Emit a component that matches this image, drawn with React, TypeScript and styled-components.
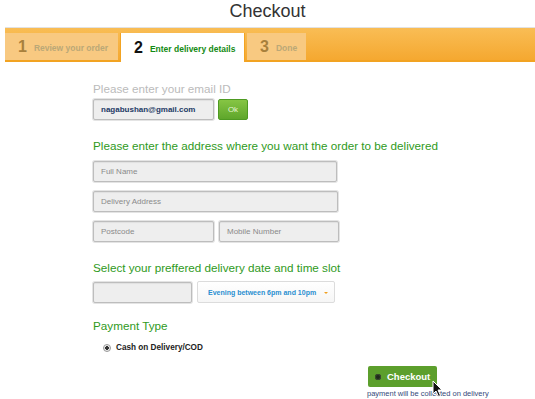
import React from "react";
import styled, { createGlobalStyle } from "styled-components";

const Global = createGlobalStyle`
  html, body { margin: 0; padding: 0; background: #fff; }
  body { font-family: "Liberation Sans", Arial, sans-serif; width: 535px; height: 399px; overflow: hidden; }
`;

const Page = styled.div`
  position: relative;
  width: 535px;
  height: 399px;
`;

const Title = styled.h1`
  margin: 0;
  height: 27px;
  font-size: 18px;
  line-height: 22px;
  font-weight: normal;
  color: #333;
  text-align: center;
`;

const Bar = styled.div`
  margin-left: 5px;
  height: 29px;
  border-top: 1px solid #e2e2e2;
  border-bottom: 2px solid #f2a322;
  background: linear-gradient(#f9bd55, #f5a830);
  display: flex;
  align-items: flex-end;
  padding-top: 3px;
  box-sizing: content-box;
`;

const Tab = styled.div<{ $active?: boolean; $w: number }>`
  width: ${(p) => p.$w}px;
  height: ${(p) => (p.$active ? 29 : 27)}px;
  margin-bottom: ${(p) => (p.$active ? -2 : 0)}px;
  margin-right: 2px;
  box-sizing: border-box;
  background: ${(p) => (p.$active ? "#fff" : "#f8c981")};
  border-left: ${(p) => (p.$active ? "1px solid #f2a322" : "none")};
  border-right: ${(p) => (p.$active ? "1px solid #f2a322" : "none")};
  display: flex;
  align-items: center;
  padding-left: 13px;
  gap: 7px;
`;

const TabNum = styled.span<{ $active?: boolean }>`
  font-size: 16px;
  font-weight: bold;
  color: ${(p) => (p.$active ? "#111" : "#a8803c")};
`;

const TabLabel = styled.span<{ $active?: boolean }>`
  font-size: 8.5px;
  font-weight: bold;
  margin-top: 2px;
  color: ${(p) => (p.$active ? "#138a13" : "#bba877")};
`;

const Content = styled.div`
  padding-left: 93px;
  display: flex;
  flex-direction: column;
`;

const Label = styled.div<{ $muted?: boolean; $top: number }>`
  margin-top: ${(p) => p.$top}px;
  font-size: 11.7px;
  line-height: 14px;
  color: ${(p) => (p.$muted ? "#bbbbbb" : "#2f9a1c")};
`;

const Row = styled.div<{ $top: number; $gap?: number }>`
  margin-top: ${(p) => p.$top}px;
  display: flex;
  gap: ${(p) => p.$gap ?? 4}px;
  align-items: center;
`;

const Field = styled.div<{ $w: number; $h?: number; $filled?: boolean }>`
  width: ${(p) => p.$w}px;
  height: ${(p) => p.$h ?? 21}px;
  box-sizing: border-box;
  background: #eeeeee;
  border: 1px solid #bdbdbd;
  border-radius: 2px;
  box-shadow: 0 0 0 1px #e4e4e4, inset 0 1px 1px rgba(0,0,0,0.06);
  display: flex;
  align-items: center;
  padding-left: 7px;
  font-size: 8px;
  white-space: nowrap;
  font-weight: ${(p) => (p.$filled ? "bold" : "normal")};
  color: ${(p) => (p.$filled ? "#233a66" : "#8a8a8a")};
`;

const OkButton = styled.div`
  width: 30px;
  height: 21px;
  box-sizing: border-box;
  border: 1px solid #4e9a22;
  border-radius: 2px;
  background: linear-gradient(#86c544, #5ea62b);
  color: #e4f4d4;
  font-size: 8px;
  display: flex;
  align-items: center;
  justify-content: center;
`;

const Select = styled.div`
  width: 138px;
  height: 22px;
  box-sizing: border-box;
  border: 1px solid #dcdcdc;
  border-radius: 2px;
  background: linear-gradient(#ffffff, #f6f6f6);
  display: flex;
  align-items: center;
  padding-left: 10px;
  font-size: 7px;
  font-weight: bold;
  white-space: nowrap;
  color: #2a8fd0;
  gap: 8px;
`;

const Caret = styled.span`
  flex-shrink: 0;
  width: 0;
  height: 0;
  margin-top: 1px;
  border-left: 2px solid transparent;
  border-right: 2px solid transparent;
  border-top: 2px solid #f0a020;
`;

const RadioRow = styled.label`
  margin-top: 10px;
  margin-left: 10px;
  display: flex;
  align-items: center;
  gap: 5px;
  font-size: 8.2px;
  font-weight: bold;
  color: #222;
`;

const Radio = styled.span`
  width: 8px;
  height: 8px;
  box-sizing: border-box;
  border-radius: 50%;
  border: 1px solid #999;
  background: radial-gradient(circle, #333 0 1.6px, #e8e8e8 2px);
`;

const Footer = styled.div`
  margin-top: 14px;
  padding-left: 367px;
  display: flex;
  flex-direction: column;
  align-items: flex-start;
`;

const CheckoutButton = styled.div`
  margin-left: 1px;
  width: 69px;
  height: 21px;
  box-sizing: border-box;
  border-radius: 2px;
  background: #5c9f2c;
  display: flex;
  align-items: center;
  padding-left: 7px;
  gap: 6px;
  color: #fff;
  font-weight: bold;
  font-size: 9.5px;
`;

const Dot = styled.span`
  width: 6px;
  height: 6px;
  border-radius: 50%;
  background: #1f2a1a;
  box-shadow: inset 0 0 0 1px #3a4a30;
`;

const Note = styled.div`
  margin-top: 2px;
  font-size: 7.5px;
  color: #34497a;
`;

const Cursor = styled.svg`
  position: absolute;
  left: 432px;
  top: 380px;
`;

export default function App() {
  return (
    <Page>
      <Global />
      <Title>Checkout</Title>
      <Bar>
        <Tab $w={113}>
          <TabNum>1</TabNum>
          <TabLabel>Review your order</TabLabel>
        </Tab>
        <Tab $w={125} $active>
          <TabNum $active>2</TabNum>
          <TabLabel $active>Enter delivery details</TabLabel>
        </Tab>
        <Tab $w={59}>
          <TabNum>3</TabNum>
          <TabLabel>Done</TabLabel>
        </Tab>
      </Bar>
      <Content>
        <Label $muted $top={20}>Please enter your email ID</Label>
        <Row $top={3} $gap={4}>
          <Field $w={121} $filled>nagabushan@gmail.com</Field>
          <OkButton>Ok</OkButton>
        </Row>
        <Label $top={19}>Please enter the address where you want the order to be delivered</Label>
        <Row $top={8}>
          <Field $w={244}>Full Name</Field>
        </Row>
        <Row $top={9}>
          <Field $w={245}>Delivery Address</Field>
        </Row>
        <Row $top={9} $gap={5}>
          <Field $w={121}>Postcode</Field>
          <Field $w={120}>Mobile Number</Field>
        </Row>
        <Label $top={19}>Select your preffered delivery date and time slot</Label>
        <Row $top={6} $gap={5}>
          <Field $w={99} $h={21} />
          <Select>
            Evening between 6pm and 10pm
            <Caret />
          </Select>
        </Row>
        <Label $top={16}>Payment Type</Label>
        <RadioRow>
          <Radio />
          Cash on Delivery/COD
        </RadioRow>
      </Content>
      <Footer>
        <CheckoutButton>
          <Dot />
          Checkout
        </CheckoutButton>
        <Note>payment will be collected on delivery</Note>
      </Footer>
      <Cursor width="12" height="18" viewBox="0 0 12 18">
        <path d="M1 1 L1 14 L4 11 L6.5 16.5 L8.5 15.5 L6 10 L10 10 Z" fill="#111" stroke="#fff" strokeWidth="1" />
      </Cursor>
    </Page>
  );
}
